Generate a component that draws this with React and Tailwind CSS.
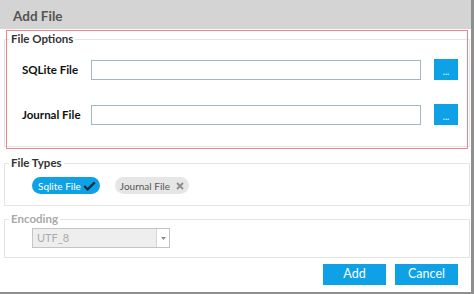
import React from 'react';

const BLUE = 'bg-[#0ea1e6]';

// Group box with its caption sitting on the top border, WinForms style.
function Group({ title, muted = false, className = '', children }) {
  return (
    <div className={`relative ml-[4px] w-[466px] border border-[#e4e4e4] ${className}`}>
      <span
        className={`absolute -top-[8px] left-[4px] bg-white px-[2px] text-[11.5px] font-bold leading-[14px] ${
          muted ? 'text-[#a9a9a9]' : 'text-[#333]'
        }`}
      >
        {title}
      </span>
      {children}
    </div>
  );
}

function FileRow({ label }) {
  return (
    <div className="flex items-center h-[21px]">
      <span className="w-[69px] text-[11.5px] font-bold text-[#111] leading-none">{label}</span>
      <input type="text" className="w-[330px] h-[20px] border border-[#a2b8c0] bg-white outline-none" />
      <button type="button" className={`ml-[13px] w-[24px] h-[21px] ${BLUE} text-[#d8f0ff] text-[9px] font-bold leading-[21px] pt-[2px]`}>
        ...
      </button>
    </div>
  );
}

export default function App() {
  return (
    <div className="w-[474px] h-[294px] bg-[#8f8f8f] font-['Lato',sans-serif]">
      <div className="relative w-[471px] h-[292px] bg-white flex flex-col">
        <div className="h-[29px] bg-[#d4d4d4] flex items-center pl-[13px] pt-[3px] text-[13.5px] font-bold text-[#555]">
          Add File
        </div>

        <Group title="File Options" className="mt-[10px] h-[108px]">
          <div className="flex flex-col gap-[24px] pt-[19px] pl-[17px]">
            <FileRow label="SQLite File" />
            <FileRow label="Journal File" />
          </div>
        </Group>

        <Group title="File Types" className="mt-[16px] h-[43px]">
          <div className="flex items-center gap-[15px] pt-[13px] pl-[27px]">
            <span className={`flex items-center h-[17px] rounded-full ${BLUE} pl-[6px] pr-[4px] text-[10px] text-white leading-none whitespace-nowrap`}>
              Sqlite File
              <svg width="13" height="10" viewBox="0 0 13 10" className="ml-[2px] shrink-0">
                <path d="M1.2 5 L4.6 8.3 L11.8 1.4" fill="none" stroke="#1b2d42" strokeWidth="2.3" />
              </svg>
            </span>
            <span className="flex items-center h-[17px] rounded-full bg-[#e6e6e6] pl-[5px] pr-[5px] text-[10px] text-[#555] leading-none whitespace-nowrap">
              Journal File
              <svg width="8" height="8" viewBox="0 0 8 8" className="ml-[6px] shrink-0">
                <path d="M1 1 L7 7 M7 1 L1 7" fill="none" stroke="#8c8c8c" strokeWidth="1.8" />
              </svg>
            </span>
          </div>
        </Group>

        <Group title="Encoding" muted className="mt-[13px] h-[39px]">
          <div className="pt-[8px] pl-[27px]">
            <div className="flex w-[138px] h-[20px] border border-[#c4c4c4] bg-[#eeeeee]">
              <span className="flex-1 pl-[4px] text-[11px] leading-[18px] text-[#aaaaaa]">UTF_8</span>
              <span className="w-[13px] bg-white border-l border-[#d6d6d6] flex items-center justify-center">
                <svg width="5" height="3" viewBox="0 0 5 3">
                  <path d="M0 0 H5 L2.5 3 Z" fill="#8a8a8a" />
                </svg>
              </span>
            </div>
          </div>
        </Group>

        <div className="flex justify-end gap-[9px] mt-[6px] pr-[13px]">
          <button type="button" className={`w-[63px] h-[21px] ${BLUE} text-white text-[12.5px] leading-none`}>Add</button>
          <button type="button" className={`w-[63px] h-[21px] ${BLUE} text-white text-[12.5px] leading-none`}>Cancel</button>
        </div>

        {/* red highlight drawn over the File Options group */}
        <div className="pointer-events-none absolute left-[6px] top-[30px] w-[462px] h-[119px] border-[1.5px] border-[#e8858e]" />
      </div>
    </div>
  );
}
